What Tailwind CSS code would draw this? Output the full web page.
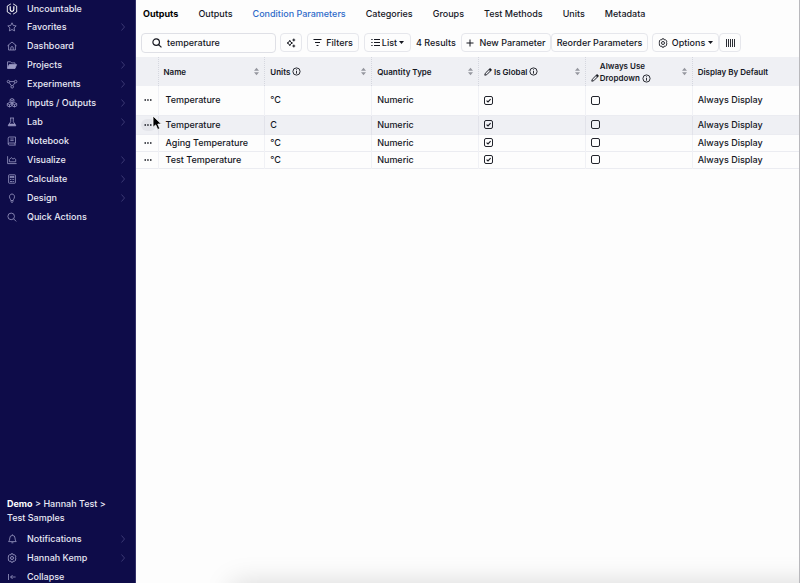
<!DOCTYPE html>
<html lang="en">
<head>
    <meta charset="UTF-8">
    <meta name="viewport" content="width=device-width, initial-scale=1.0">
    <title>Condition Parameters</title>
    <script src="https://cdn.jsdelivr.net/npm/@tailwindcss/browser@4"></script>
</head>
<body class="h-screen overflow-hidden flex bg-[#fdfdfd] font-['Inter',sans-serif] text-[9px] font-medium text-[#15171f]">
    <!-- Shared icons -->
    <svg class="hidden">
        <symbol id="chevron" viewBox="0 0 6 10"><path d="M1.5 1.5L4.5 5L1.5 8.5" fill="none" stroke="currentColor" stroke-width=".8"/></symbol>
        <symbol id="sort" viewBox="0 0 6 10"><path d="M0 4L3 .6L6 4zM0 6L3 9.4L6 6z" fill="currentColor"/></symbol>
        <symbol id="info" viewBox="0 0 10 10"><circle cx="5" cy="5" r="4" fill="none" stroke="currentColor"/><path d="M5 4.4V7.4M5 2.6V3.6" stroke="currentColor"/></symbol>
        <symbol id="pencil" viewBox="0 0 10 10"><path d="M1 9L1.6 6.6L7 1.2Q7.8.6 8.6 1.4T8.8 3L3.4 8.4z" fill="none" stroke="currentColor" stroke-width="1.2"/><path d="M6 2.2L7 1.2Q7.8.6 8.6 1.4T8.8 3L7.8 4z" fill="currentColor"/></symbol>
        <symbol id="dots" viewBox="0 0 8 4"><path d="M.5 1.2H2V2.8H.5zM3.2 1.2H4.7V2.8H3.2zM6 1.2H7.5V2.8H6z" fill="currentColor"/></symbol>
        <symbol id="tick" viewBox="0 0 9 9"><path d="M2.6 4.6L4 5.9L6.6 3.2" fill="none" stroke="currentColor" stroke-width="1.1"/></symbol>
        <symbol id="gear" viewBox="0 0 10 10"><path d="M4.1.8H5.9L6.3 1.9L7.5 1.7L8.8 3.2L8.4 4.4L9.2 5L8.4 5.8L8.7 7L7.5 8.3L6.3 8L5.9 9.2H4.1L3.7 8L2.4 8.3L1.3 7L1.6 5.8L.8 5L1.6 4.2L1.3 3L2.5 1.7L3.7 1.9z" fill="none" stroke="currentColor" stroke-width=".9" stroke-linejoin="round"/><circle cx="5" cy="5" r="1.5" fill="none" stroke="currentColor" stroke-width=".9"/></symbol>
    </svg>

    <!-- Sidebar -->
    <aside class="w-[136px] shrink-0 flex flex-col bg-[#0e0c49] text-[#e9e9f5] border-r border-[#34326a]">
        <nav>
            <a href="#" class="flex h-[17px] items-center gap-2 pl-[6px] pr-[9px]">
                <svg class="size-3 text-white" viewBox="0 0 12 12" fill="none" stroke="currentColor"><path d="M4.9.9L1.3 3V9L4.9 11.1M7.1.9L10.7 3V9L7.1 11.1" stroke-width=".9"/><path d="M4.2 3.2V6.6Q4.2 8.4 6 8.4T7.8 6.6V3.2" stroke-width="1.2"/></svg>
                <span class="ml-px">Uncountable</span>
            </a>
            <a href="#" class="flex h-[19px] items-center gap-2 pl-[6px] pr-[9px]">
                <svg class="size-3 text-[#9c9bc4]" viewBox="0 0 12 12" fill="none" stroke="currentColor" stroke-width=".8"><path d="M6 1.8L7.3 4.5L10.2 4.9L8.1 6.9L8.6 9.9L6 8.5L3.4 9.9L3.9 6.9L1.8 4.9L4.7 4.5z"/></svg>
                <span class="ml-px">Favorites</span>
                <svg class="ml-auto w-[6px] h-[10px] text-[#45437c]"><use href="#chevron"/></svg>
            </a>
            <a href="#" class="flex h-[19px] items-center gap-2 pl-[6px] pr-[9px]">
                <svg class="size-3 text-[#9c9bc4]" viewBox="0 0 12 12" fill="none" stroke="currentColor" stroke-width=".8"><path d="M1.5 5.8L6 2L10.5 5.8M2.6 5V10H9.4V5M4.8 10V7.8Q4.8 6.6 6 6.6T7.2 7.8V10"/></svg>
                <span class="ml-px">Dashboard</span>
            </a>
            <a href="#" class="flex h-[19px] items-center gap-2 pl-[6px] pr-[9px]">
                <svg class="size-3 text-[#9c9bc4]" viewBox="0 0 12 12" fill="none" stroke="currentColor" stroke-width=".8"><path d="M1.5 9V2.8H4.6L5.6 3.9H9V5.4"/><path d="M3.2 5.6H10.6L9 9.5H1.5z" fill="currentColor"/></svg>
                <span class="ml-px">Projects</span>
                <svg class="ml-auto w-[6px] h-[10px] text-[#45437c]"><use href="#chevron"/></svg>
            </a>
            <a href="#" class="flex h-[19px] items-center gap-2 pl-[6px] pr-[9px]">
                <svg class="size-3 text-[#9c9bc4]" viewBox="0 0 12 12" fill="none" stroke="currentColor" stroke-width=".8"><circle cx="2.4" cy="3.6" r="1.2"/><circle cx="9.6" cy="3.6" r="1.3"/><circle cx="6.2" cy="8.8" r="1.3"/><path d="M3.6 3.6H8.3M3.1 4.6L5.4 7.7M8.8 4.8L7 7.6"/></svg>
                <span class="ml-px">Experiments</span>
                <svg class="ml-auto w-[6px] h-[10px] text-[#45437c]"><use href="#chevron"/></svg>
            </a>
            <a href="#" class="flex h-[19px] items-center gap-2 pl-[6px] pr-[9px]">
                <svg class="size-3 text-[#9c9bc4]" viewBox="0 0 12 12" fill="none" stroke="currentColor" stroke-width=".8"><path d="M6 1.5L8 2.5V4.8L6 5.8L4 4.8V2.5zM4 2.6L6 3.6L8 2.6M6 3.6V5.8M3.5 5.5L5.8 6.6V8.9L3.5 10L1.3 8.9V6.6zM1.3 6.6L3.5 7.7L5.8 6.6M3.5 7.7V10M8.5 5.5L10.7 6.6V8.9L8.5 10L6.2 8.9V6.6zM6.2 6.6L8.5 7.7L10.7 6.6M8.5 7.7V10"/></svg>
                <span class="ml-px">Inputs / Outputs</span>
                <svg class="ml-auto w-[6px] h-[10px] text-[#45437c]"><use href="#chevron"/></svg>
            </a>
            <a href="#" class="flex h-[19px] items-center gap-2 pl-[6px] pr-[9px]">
                <svg class="size-3 text-[#9c9bc4]" viewBox="0 0 12 12" fill="none" stroke="currentColor" stroke-width=".8"><path d="M4 2H8M4.7 2V5.8L2.9 8.3H9.1L7.3 5.8V2"/><path d="M2.9 8.3L2.2 9.8H9.8L9.1 8.3z" fill="currentColor"/></svg>
                <span class="ml-px">Lab</span>
                <svg class="ml-auto w-[6px] h-[10px] text-[#45437c]"><use href="#chevron"/></svg>
            </a>
            <a href="#" class="flex h-[19px] items-center gap-2 pl-[6px] pr-[9px]">
                <svg class="size-3 text-[#9c9bc4]" viewBox="0 0 12 12" fill="none" stroke="currentColor" stroke-width=".8"><path d="M9.5 8V2H3.4Q2.2 2 2.2 3.2V8.9Q2.2 10.1 3.4 10.1H9.7M9.5 8H3.4Q2.3 8 2.2 9M9 8V10M4.3 4H7.7M4.3 5.6H7.7"/></svg>
                <span class="ml-px">Notebook</span>
            </a>
            <a href="#" class="flex h-[19px] items-center gap-2 pl-[6px] pr-[9px]">
                <svg class="size-3 text-[#9c9bc4]" viewBox="0 0 12 12" fill="none" stroke="currentColor" stroke-width=".8"><path d="M1.6 2.2V9.6H10.6M3.4 7.8V5.5L5.3 3.6L7 5.2L8.2 4.2L9.7 5.4V7.8z"/></svg>
                <span class="ml-px">Visualize</span>
                <svg class="ml-auto w-[6px] h-[10px] text-[#45437c]"><use href="#chevron"/></svg>
            </a>
            <a href="#" class="flex h-[19px] items-center gap-2 pl-[6px] pr-[9px]">
                <svg class="size-3 text-[#9c9bc4]" viewBox="0 0 12 12" fill="none" stroke="currentColor" stroke-width=".8"><rect x="2.6" y="1.8" width="6.8" height="8.4" rx=".6"/><path d="M4 3.5H8V4.6H4zM4 6.5H5M5.6 6.5H6.6M7.1 6.5H8.1M4 8.5H6.6M7.1 8.5H8.1"/></svg>
                <span class="ml-px">Calculate</span>
                <svg class="ml-auto w-[6px] h-[10px] text-[#45437c]"><use href="#chevron"/></svg>
            </a>
            <a href="#" class="flex h-[19px] items-center gap-2 pl-[6px] pr-[9px]">
                <svg class="size-3 text-[#9c9bc4]" viewBox="0 0 12 12" fill="none" stroke="currentColor" stroke-width=".8"><path d="M4.8 8.5Q4.7 7.6 3.9 6.4Q3 4.8 3.9 3.2Q4.6 2 6 2T8.1 3.2Q9 4.8 8.1 6.4Q7.3 7.6 7.2 8.5zM4.9 9.2L5.4 10.3H6.6L7.1 9.2"/></svg>
                <span class="ml-px">Design</span>
                <svg class="ml-auto w-[6px] h-[10px] text-[#45437c]"><use href="#chevron"/></svg>
            </a>
            <a href="#" class="flex h-[19px] items-center gap-2 pl-[6px] pr-[9px]">
                <svg class="size-3 text-[#9c9bc4]" viewBox="0 0 12 12" fill="none" stroke="currentColor" stroke-width=".8"><circle cx="5.2" cy="5.4" r="3.3"/><path d="M7.6 7.8L10.2 10.4"/></svg>
                <span class="ml-px">Quick Actions</span>
            </a>
        </nav>
        <div class="mt-auto -mb-[3px]">
            <p class="px-[7px] mb-1 leading-[14px]"><b class="font-bold text-white">Demo</b> &gt; Hannah Test &gt;<br>Test Samples</p>
            <a href="#" class="flex h-[19px] items-center gap-2 pl-[6px] pr-[9px]">
                <svg class="size-3 text-[#9c9bc4]" viewBox="0 0 12 12" fill="none" stroke="currentColor" stroke-width=".8"><path d="M2.6 8.6Q3.8 7.4 3.8 5Q3.8 2.5 6.4 2.4T9 5Q9 7.4 10.2 8.6zM5.4 9.8H7.4M6.4 1.4V2.4"/></svg>
                <span class="ml-px">Notifications</span>
                <svg class="ml-auto w-[6px] h-[10px] text-[#45437c]"><use href="#chevron"/></svg>
            </a>
            <a href="#" class="flex h-[19px] items-center gap-2 pl-[6px] pr-[9px]">
                <svg class="size-3 p-px text-[#9c9bc4]"><use href="#gear"/></svg>
                <span class="ml-px">Hannah Kemp</span>
                <svg class="ml-auto w-[6px] h-[10px] text-[#45437c]"><use href="#chevron"/></svg>
            </a>
            <button class="flex h-[19px] w-full items-center gap-2 pl-[6px] pr-[9px]">
                <svg class="size-3 text-[#9c9bc4]" viewBox="0 0 12 12" fill="none" stroke="currentColor" stroke-width=".8"><path d="M2.5 3V9M9.6 6H4.6M6.6 4L4.6 6L6.6 8"/></svg>
                <span class="ml-px">Collapse</span>
            </button>
        </div>
    </aside>

    <!-- Content -->
    <main class="relative flex-1 min-w-0 overflow-hidden border-r border-[#b9b9bd]">
        <nav class="flex h-7 items-center gap-5 px-[7px] whitespace-nowrap">
            <h1 class="font-bold text-black">Outputs</h1>
            <a href="#">Outputs</a>
            <a href="#" class="text-[#2f6bc9]">Condition Parameters</a>
            <a href="#">Categories</a>
            <a href="#">Groups</a>
            <a href="#">Test Methods</a>
            <a href="#">Units</a>
            <a href="#">Metadata</a>
        </nav>

        <div class="flex h-[29px] items-center pl-[5px] whitespace-nowrap">
            <label class="flex h-5 w-[135px] items-center gap-[5px] rounded border border-[#dfe0e6] px-[10px]">
                <svg class="size-[10px] shrink-0" viewBox="0 0 11 11" fill="none" stroke="currentColor" stroke-width="1.3"><circle cx="4.6" cy="4.6" r="3.6"/><path d="M7.2 7.2L10.4 10.4"/></svg>
                <input type="text" value="temperature" aria-label="Search" class="w-full min-w-0 outline-none">
            </label>
            <button class="ml-1 grid h-[19px] w-[22px] place-items-center rounded border border-[#e6e7ec]" aria-label="Suggest">
                <svg class="size-[10px]" viewBox="0 0 10 10" fill="none" stroke="currentColor"><path d="M3.8 2.3L4.7 4.1L6.5 5L4.7 5.9L3.8 7.7L2.9 5.9L1.1 5L2.9 4.1z"/><path d="M7.8.6V3.4M6.4 2H9.2M7.8 6.6V9.4M6.4 8H9.2"/></svg>
            </button>
            <button class="ml-[5px] flex h-[19px] w-[52px] items-center justify-center gap-1 rounded border border-[#e6e7ec]">
                <svg class="size-[9px]" viewBox="0 0 9 9" stroke="currentColor"><path d="M.5 1.5H8.5M2 4.5H7M3.5 7.5H5.5"/></svg>
                Filters
            </button>
            <button class="ml-[5px] flex h-[19px] w-[47px] items-center justify-center gap-[2px] rounded border border-[#e6e7ec]">
                <svg class="size-[9px]" viewBox="0 0 9 9" stroke="currentColor"><path d="M3 1.5H9M3 4.5H9M3 7.5H9M.3 1.5H1.6M.3 4.5H1.6M.3 7.5H1.6"/></svg>
                List
                <svg class="h-[3px] w-[5px]" viewBox="0 0 5 3" fill="currentColor"><path d="M0 0H5L2.5 3z"/></svg>
            </button>
            <span class="ml-[5px] w-10">4 Results</span>
            <button class="ml-[5px] flex h-[19px] w-[90px] items-center justify-center gap-[5px] rounded border border-[#e6e7ec]">
                <svg class="size-2" viewBox="0 0 8 8" stroke="currentColor"><path d="M4 .5V7.5M.5 4H7.5"/></svg>
                New Parameter
            </button>
            <button class="h-[19px] w-[97px] rounded border border-[#e6e7ec]">Reorder Parameters</button>
            <button class="ml-1 flex h-[19px] w-[67px] items-center justify-center gap-1 rounded border border-[#e6e7ec]">
                <svg class="size-[10px]"><use href="#gear"/></svg>
                Options
                <svg class="-ml-px h-[3px] w-[5px]" viewBox="0 0 5 3" fill="currentColor"><path d="M0 0H5L2.5 3z"/></svg>
            </button>
            <button class="grid h-[19px] w-[22px] place-items-center rounded border border-[#e6e7ec]" aria-label="Columns">
                <svg class="h-2 w-[9px]" viewBox="0 0 9 8" stroke="currentColor"><path d="M.5 0V8M2.5 0V8M4.5 0V8M6.5 0V8M8.5 0V8" stroke-width=".9"/></svg>
            </button>
        </div>

        <table class="w-full table-fixed border-collapse text-left">
            <colgroup>
                <col class="w-[22px]"><col><col><col><col><col><col>
            </colgroup>
            <thead class="bg-[#eff0f4] text-[8px]">
                <tr class="h-[29px] *:font-semibold *:px-[5px] *:border-r *:border-dotted *:border-[#d5d7df] *:last:border-r-0">
                    <th></th>
                    <th><div class="flex items-center justify-between">Name<svg class="w-[5px] h-[9px] text-[#95979f]"><use href="#sort"/></svg></div></th>
                    <th><div class="flex items-center gap-[2px]">Units<svg class="size-[9px]"><use href="#info"/></svg><svg class="ml-auto w-[5px] h-[9px] text-[#95979f]"><use href="#sort"/></svg></div></th>
                    <th><div class="flex items-center justify-between">Quantity Type<svg class="w-[5px] h-[9px] text-[#95979f]"><use href="#sort"/></svg></div></th>
                    <th><div class="flex items-center gap-[2px]"><svg class="size-2"><use href="#pencil"/></svg>Is Global<svg class="size-[9px]"><use href="#info"/></svg><svg class="ml-auto w-[5px] h-[9px] text-[#95979f]"><use href="#sort"/></svg></div></th>
                    <th><div class="flex items-center gap-px leading-3"><svg class="mt-3 size-2"><use href="#pencil"/></svg><span>Always Use<br>Dropdown<svg class="ml-[2px] inline size-[9px]"><use href="#info"/></svg></span><svg class="ml-auto w-[5px] h-[9px] text-[#95979f]"><use href="#sort"/></svg></div></th>
                    <th>Display By Default</th>
                </tr>
            </thead>
            <tbody class="leading-3 [&_td]:py-0">
                <tr class="h-[29px] border-b border-[#ebecf1] *:px-[5px] *:border-r *:border-[#f0f1f5] *:first:pr-[2px] *:last:border-r-0">
                    <td><button class="grid h-3 w-full place-items-center" aria-label="Row menu"><svg class="h-1 w-2 shrink-0"><use href="#dots"/></svg></button></td>
                    <td><span class="pl-[2px]">Temperature</span></td>
                    <td>°C</td>
                    <td>Numeric</td>
                    <td><label class="relative block size-[9px]"><input type="checkbox" checked aria-label="Is Global" class="block size-[9px] appearance-none rounded-[2px] border border-[#22242c]"><svg class="absolute inset-0 size-[9px]"><use href="#tick"/></svg></label></td>
                    <td><input type="checkbox" aria-label="Always Use Dropdown" class="block size-[9px] appearance-none rounded-[2px] border border-[#22242c]"></td>
                    <td>Always Display</td>
                </tr>
                <tr class="h-[19px] bg-[#eff0f4] border-b border-[#ebecf1] *:px-[5px] *:border-r *:border-[#e2e3ea] *:first:pr-[2px] *:last:border-r-0">
                    <td><button class="grid h-3 w-full place-items-center rounded-full bg-[#e4e5ea]" aria-label="Row menu"><svg class="h-1 w-2 shrink-0"><use href="#dots"/></svg></button></td>
                    <td><span class="pl-[2px]">Temperature</span></td>
                    <td>C</td>
                    <td>Numeric</td>
                    <td><label class="relative block size-[9px]"><input type="checkbox" checked aria-label="Is Global" class="block size-[9px] appearance-none rounded-[2px] border border-[#22242c]"><svg class="absolute inset-0 size-[9px]"><use href="#tick"/></svg></label></td>
                    <td><input type="checkbox" aria-label="Always Use Dropdown" class="block size-[9px] appearance-none rounded-[2px] border border-[#22242c]"></td>
                    <td>Always Display</td>
                </tr>
                <tr class="h-[17px] border-b border-[#ebecf1] *:px-[5px] *:border-r *:border-[#f0f1f5] *:first:pr-[2px] *:last:border-r-0">
                    <td><button class="grid h-3 w-full place-items-center" aria-label="Row menu"><svg class="h-1 w-2 shrink-0"><use href="#dots"/></svg></button></td>
                    <td><span class="pl-[2px]">Aging Temperature</span></td>
                    <td>°C</td>
                    <td>Numeric</td>
                    <td><label class="relative block size-[9px]"><input type="checkbox" checked aria-label="Is Global" class="block size-[9px] appearance-none rounded-[2px] border border-[#22242c]"><svg class="absolute inset-0 size-[9px]"><use href="#tick"/></svg></label></td>
                    <td><input type="checkbox" aria-label="Always Use Dropdown" class="block size-[9px] appearance-none rounded-[2px] border border-[#22242c]"></td>
                    <td>Always Display</td>
                </tr>
                <tr class="h-[17px] border-b border-[#ebecf1] *:px-[5px] *:border-r *:border-[#f0f1f5] *:first:pr-[2px] *:last:border-r-0">
                    <td><button class="grid h-3 w-full place-items-center" aria-label="Row menu"><svg class="h-1 w-2 shrink-0"><use href="#dots"/></svg></button></td>
                    <td><span class="pl-[2px]">Test Temperature</span></td>
                    <td>°C</td>
                    <td>Numeric</td>
                    <td><label class="relative block size-[9px]"><input type="checkbox" checked aria-label="Is Global" class="block size-[9px] appearance-none rounded-[2px] border border-[#22242c]"><svg class="absolute inset-0 size-[9px]"><use href="#tick"/></svg></label></td>
                    <td><input type="checkbox" aria-label="Always Use Dropdown" class="block size-[9px] appearance-none rounded-[2px] border border-[#22242c]"></td>
                    <td>Always Display</td>
                </tr>
            </tbody>
        </table>

        <!-- Shadow of the panel docked under the page -->
        <div class="absolute left-24 -right-10 top-full h-10 shadow-[0_0_28px_rgba(0,0,0,0.15)]"></div>

        <!-- Mouse pointer -->
        <svg class="absolute left-4 top-[115px] h-4 w-[11px]" viewBox="0 0 11 16"><path d="M1 1V12.3L3.7 9.9L5.7 14.5L7.8 13.6L5.8 9.1H9.4z" fill="#000" stroke="#fff" stroke-width=".8"/></svg>
    </main>
</body>
</html>
